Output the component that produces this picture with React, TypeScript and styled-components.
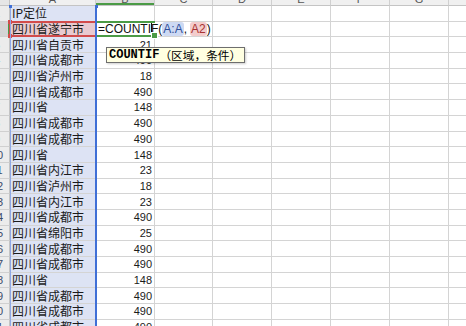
import styled, { createGlobalStyle } from "styled-components";

const GlobalStyle = createGlobalStyle`
  html, body { margin: 0; padding: 0; background: #fff; overflow: hidden; }
`;

const GRID = "#d4d4d4";
const GREEN = "#4b9b46";
const BLUE = "#3f6fd6";
const RED = "#d24b4b";

const Sheet = styled.div`
  display: grid;
  grid-template-columns: 10px 86px 59px 58px 59px 59px 59px 59px 59px;
  grid-template-rows: 6px repeat(21, 15.7px);
  width: 466px;
  height: 326px;
  overflow: hidden;
  font-family: "Liberation Sans", Arial, sans-serif;
  font-size: 11px;
  color: #1b1b1b;
`;

const Corner = styled.div`
  grid-row: 1;
  grid-column: 1;
  background: #e6e6e6;
  border-right: 1px solid #c4c4c4;
  border-bottom: 1px solid #c4c4c4;
`;

const ColHead = styled.div<{ $c: number; $active?: boolean }>`
  grid-row: 1;
  grid-column: ${(p) => p.$c};
  background: ${(p) => (p.$active ? "#dedede" : "#f0f0f0")};
  border-right: 1px solid #d0d0d0;
  border-bottom: 1px solid #c4c4c4;
  box-shadow: ${(p) => (p.$active ? `inset 0 -2px ${GREEN}` : "none")};
  display: flex;
  align-items: flex-end;
  justify-content: center;
  overflow: hidden;
  color: #555;
  line-height: 1;
`;

const RowHead = styled.div<{ $r: number; $active?: boolean }>`
  grid-row: ${(p) => p.$r};
  grid-column: 1;
  background: ${(p) => (p.$active ? "#d4d4d4" : "#ececec")};
  border-bottom: 1px solid #d0d0d0;
  border-right: ${(p) => (p.$active ? `2px solid ${GREEN}` : "1px solid #c4c4c4")};
  display: flex;
  align-items: center;
  overflow: hidden;
`;

// the row numbers are mostly cut off by the left edge of the shot
const RowNum = styled.span`
  flex: none;
  width: 26px;
  margin-left: -16px;
  text-align: center;
  color: #3a4a6a;
`;

const Cell = styled.div<{ $r: number; $c: number; $tint?: string; $num?: boolean }>`
  grid-row: ${(p) => p.$r};
  grid-column: ${(p) => p.$c};
  background: ${(p) => p.$tint ?? "#fff"};
  border-right: 1px solid ${GRID};
  border-bottom: 1px solid ${GRID};
  display: flex;
  align-items: center;
  justify-content: ${(p) => (p.$num ? "flex-end" : "flex-start")};
  padding: 0 2px;
  overflow: hidden;
  white-space: nowrap;
`;

const Zh = styled.span`
  font-family: "Noto Sans CJK SC", "Liberation Sans", sans-serif;
  font-size: 12px;
  line-height: 1;
  color: #1b1b1b;
`;

const RangeFrame = styled.div`
  grid-column: 2;
  grid-row: 2 / 23;
  margin-right: -1px;
  border-left: 1px solid #8ea8e6;
  border-right: 2px solid ${BLUE};
  position: relative;
  z-index: 3;
  pointer-events: none;

  &::before,
  &::after {
    content: "";
    position: absolute;
    top: -1px;
    width: 3px;
    height: 3px;
    background: ${BLUE};
  }
  &::before { left: -2px; }
  &::after { right: -3px; }
`;

const RefBox = styled.div`
  grid-column: 2;
  grid-row: 3;
  margin: -1px -1px 0 -1px;
  border: 2px solid ${RED};
  position: relative;
  z-index: 2;

  &::before,
  &::after {
    content: "";
    position: absolute;
    left: -3px;
    width: 4px;
    height: 4px;
    background: ${RED};
  }
  &::before { top: -3px; }
  &::after { bottom: -3px; }
`;

const ActiveFrame = styled.div`
  grid-column: 3;
  grid-row: 3;
  margin-top: -1px;
  border-top: 2px solid ${GREEN};
  border-bottom: 2px solid ${GREEN};
  position: relative;
  z-index: 2;
  pointer-events: none;

  &::after {
    content: "";
    position: absolute;
    right: -3px;
    bottom: -4px;
    width: 5px;
    height: 5px;
    background: ${GREEN};
    border: 1px solid #fff;
  }
`;

const Editor = styled.div`
  grid-column: 3 / 5;
  grid-row: 3;
  margin: 0 1px 1px 0;
  background: #fff;
  position: relative;
  z-index: 1;
  display: flex;
  align-items: center;
  padding-left: 2px;
  white-space: nowrap;
  font-size: 12px;
  color: #111;
`;

const Caret = styled.span`
  display: inline-block;
  width: 1px;
  height: 13px;
  margin: 0 -1px 0 0;
  background: #111;
  vertical-align: middle;
`;

const RefTag = styled.span<{ $bg: string; $fg: string; $gap?: boolean }>`
  background: ${(p) => p.$bg};
  color: ${(p) => p.$fg};
  border-radius: 3px;
  padding: 0 1px;
  margin-left: ${(p) => (p.$gap ? "3px" : "0")};
`;

const Tip = styled.div`
  position: absolute;
  left: 10px;
  top: 25px;
  display: flex;
  align-items: center;
  height: 14px;
  padding: 0 3px 0 2px;
  background: #ffffe1;
  border: 1px solid #6e6e6e;
  box-shadow: 1px 1px 2px rgba(0, 0, 0, 0.2);
  z-index: 5;
`;

const TipFn = styled.b`
  font-family: "Liberation Mono", "Courier New", monospace;
  font-size: 12px;
  color: #000;
`;

const TipArgs = styled.span`
  font-family: "Noto Sans CJK SC", sans-serif;
  font-size: 11.7px;
  color: #000;
`;

const letters = ["A", "B", "C", "D", "E", "F", "G", "H"];

const rows: [string, string][] = [
  ["IP定位", ""],
  ["四川省遂宁市", ""],
  ["四川省自贡市", "21"],
  ["四川省成都市", "490"],
  ["四川省泸州市", "18"],
  ["四川省成都市", "490"],
  ["四川省", "148"],
  ["四川省成都市", "490"],
  ["四川省成都市", "490"],
  ["四川省", "148"],
  ["四川省内江市", "23"],
  ["四川省泸州市", "18"],
  ["四川省内江市", "23"],
  ["四川省成都市", "490"],
  ["四川省绵阳市", "25"],
  ["四川省成都市", "490"],
  ["四川省成都市", "490"],
  ["四川省", "148"],
  ["四川省成都市", "490"],
  ["四川省成都市", "490"],
  ["四川省成都市", "490"],
];

function App() {
  return (
    <>
      <GlobalStyle />
      <Sheet>
        <Corner />
        {letters.map((l, i) => (
          <ColHead key={l} $c={i + 2} $active={l === "B"}>
            <span>{l}</span>
          </ColHead>
        ))}

        {rows.map(([place, count], i) => {
          const r = i + 2;
          const n = i + 1;
          return [
            <RowHead key={`h${n}`} $r={r} $active={n === 2}>
              <RowNum>{n}</RowNum>
            </RowHead>,
            <Cell key={`a${n}`} $r={r} $c={2} $tint={n === 2 ? "#e8cad0" : "#dde3f4"}>
              <Zh>{place}</Zh>
            </Cell>,
            <Cell key={`b${n}`} $r={r} $c={3} $num>
              {count}
            </Cell>,
            ...[4, 5, 6, 7, 8, 9].map((c) => <Cell key={`${c}-${n}`} $r={r} $c={c} />),
          ];
        })}

        <RangeFrame />
        <RefBox />
        <ActiveFrame />
        <Editor>
          =COUNTI<Caret />F(
          <RefTag $bg="#cdd9f3" $fg="#2f4f9a">A:A</RefTag>,
          <RefTag $bg="#f3cccc" $fg="#a83232" $gap>A2</RefTag>)
          <Tip>
            <TipFn>COUNTIF</TipFn>
            <TipArgs>（区域，条件）</TipArgs>
          </Tip>
        </Editor>
      </Sheet>
    </>
  );
}

export default App;
